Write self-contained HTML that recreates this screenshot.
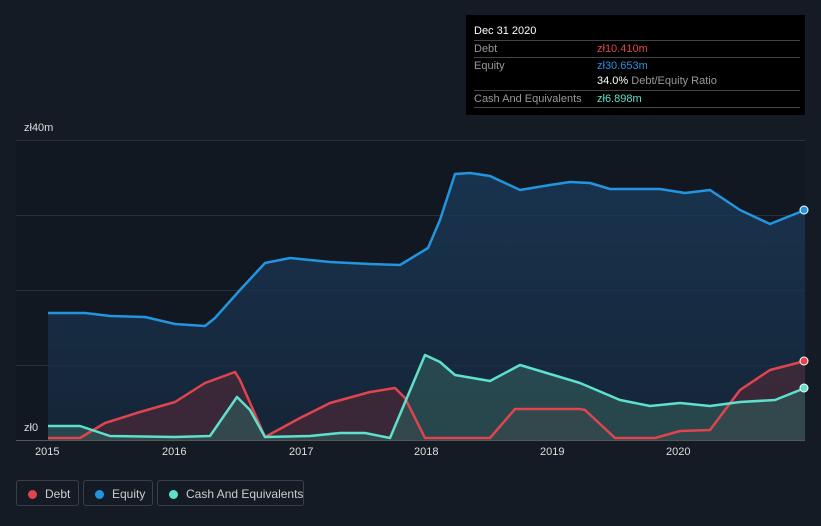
<!DOCTYPE html>
<html><head><style>
body{margin:0;width:821px;height:526px;background:#151b25;font-family:"Liberation Sans",sans-serif;overflow:hidden;position:relative}
.tt{position:absolute;left:466px;top:15px;width:339px;height:100px;background:#000;font-size:11px}
.tt .h{position:absolute;left:8px;top:10px;color:#fff}
.row{position:absolute;left:8px;width:326px;border-top:1px solid #444;height:16px;line-height:16px;color:#999;white-space:nowrap}
.row b{font-weight:normal;position:absolute;left:123px}
.leg{position:absolute;top:480px;height:26px;border:1px solid #3a3f47;border-radius:3px;color:#ccc;font-size:12px;line-height:26px;box-sizing:border-box;white-space:nowrap}
.leg i{position:absolute;left:11px;top:9px;width:9px;height:9px;border-radius:50%}
.leg span{position:absolute;left:28px}
.ax{position:absolute;color:#ddd;font-size:11px}
</style></head><body>
<svg width="821" height="526" style="position:absolute;left:0;top:0">
<rect x="16" y="140" width="789" height="300" fill="#121821"/>
<g stroke="#2a303a" stroke-width="1">
<line x1="16" y1="140.5" x2="805" y2="140.5"/><line x1="16" y1="215.5" x2="805" y2="215.5"/>
<line x1="16" y1="290.5" x2="805" y2="290.5"/><line x1="16" y1="365.5" x2="805" y2="365.5"/>
</g>
<defs>
<linearGradient id="ge" x1="0" y1="0" x2="0" y2="1"><stop offset="0" stop-color="#1a3a5a" stop-opacity=".8"/><stop offset="1" stop-color="#16283d" stop-opacity=".8"/></linearGradient>
</defs>
<path fill="url(#ge)" d="M48,313 L85,313 110,316 145,317 175,324 205,326 215,318 240,290 265,263 290,258 330,262 370,264 400,265 428,248 440,220 455,174 470,173 490,176 520,190 550,185 570,182 590,183 610,189 660,189 685,193 710,190 740,210 770,224 805,210 L805,440 48,440Z"/>
<path fill="#4a2a38" fill-opacity=".7" d="M48,438 L80,438 105,423 140,412 175,402 205,383 235,372 240,380 265,437 300,418 330,403 370,392 395,388 405,398 425,438 490,438 515,409 580,409 585,410 615,438 655,438 680,431 710,430 740,390 770,370 805,361 L805,440 48,440Z"/>
<path fill="#2f5555" fill-opacity=".7" d="M48,426 L80,426 110,436 175,437 210,436 237,397 250,410 265,437 310,436 340,433 365,433 390,438 425,355 440,362 455,375 490,381 520,365 550,374 580,383 620,400 650,406 680,403 710,406 740,402 775,400 805,388 L805,440 48,440Z"/>
<g fill="none" stroke-width="2.5" stroke-linejoin="round">
<polyline stroke="#2394df" points="48,313 85,313 110,316 145,317 175,324 205,326 215,318 240,290 265,263 290,258 330,262 370,264 400,265 428,248 440,220 455,174 470,173 490,176 520,190 550,185 570,182 590,183 610,189 660,189 685,193 710,190 740,210 770,224 805,210"/>
<polyline stroke="#e0444f" points="48,438 80,438 105,423 140,412 175,402 205,383 235,372 240,380 265,437 300,418 330,403 370,392 395,388 405,398 425,438 490,438 515,409 580,409 585,410 615,438 655,438 680,431 710,430 740,390 770,370 805,361"/>
<polyline stroke="#5ee0cc" points="48,426 80,426 110,436 175,437 210,436 237,397 250,410 265,437 310,436 340,433 365,433 390,438 425,355 440,362 455,375 490,381 520,365 550,374 580,383 620,400 650,406 680,403 710,406 740,402 775,400 805,388"/>
</g>
<circle cx="804" cy="210" r="4" fill="#2394df" stroke="#fff"/>
<circle cx="804" cy="361" r="4" fill="#e0444f" stroke="#fff"/>
<circle cx="804" cy="388" r="4" fill="#5ee0cc" stroke="#fff"/>
<line x1="16" y1="440.5" x2="805" y2="440.5" stroke="#555"/>
</svg>
<div class="ax" style="left:24px;top:122px">zł40m</div>
<div class="ax" style="left:24px;top:422px">zł0</div>
<div class="ax" style="left:35px;top:446px">2015</div>
<div class="ax" style="left:162px;top:446px">2016</div>
<div class="ax" style="left:289px;top:446px">2017</div>
<div class="ax" style="left:414px;top:446px">2018</div>
<div class="ax" style="left:540px;top:446px">2019</div>
<div class="ax" style="left:666px;top:446px">2020</div>
<div class="tt"><div class="h">Dec 31 2020</div>
<div class="row" style="top:25px">Debt<b style="color:#e0444f">zł10.410m</b></div>
<div class="row" style="top:42px">Equity<b style="color:#2394df">zł30.653m</b></div>
<div class="row" style="top:58px;border:none"><b><span style="color:#fff">34.0%</span> Debt/Equity Ratio</b></div>
<div class="row" style="top:75px">Cash And Equivalents<b style="color:#5ee0cc">zł6.898m</b></div>
<div class="row" style="top:92px;height:0"></div>
</div>
<div class="leg" style="left:16px;width:63px"><i style="background:#e0444f"></i><span>Debt</span></div>
<div class="leg" style="left:83px;width:70px"><i style="background:#2394df"></i><span>Equity</span></div>
<div class="leg" style="left:157px;width:147px"><i style="background:#5ee0cc"></i><span>Cash And Equivalents</span></div>
</body></html>
